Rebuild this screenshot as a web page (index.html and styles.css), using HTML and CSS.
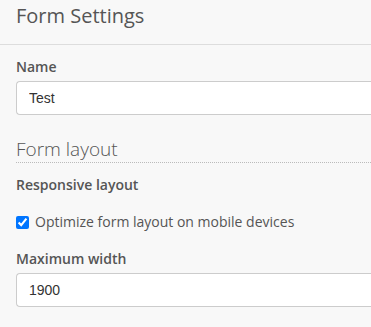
FILE: index.html
```html
<!doctype html>
<html lang="en">
	<head>
		<meta charset="UTF-8" />
		<title>Form Settings</title>
		<link rel="stylesheet" href="styles.css">
	</head>
	<body>
		<header class="panel-header">
			<h1>Form Settings</h1>
		</header>

		<main class="panel-body">
			<div class="field">
				<label for="name" class="label">Name</label>
				<input id="name" type="text" class="input" value="Test" />
			</div>

			<h2 class="section-title">Form layout</h2>

			<div class="field">
				<div class="label">Responsive layout</div>
				<label class="check">
					<input type="checkbox" checked />
					<span>Optimize form layout on mobile devices</span>
				</label>
			</div>

			<div class="field">
				<label for="max-width" class="label">Maximum width</label>
				<input id="max-width" type="text" class="input" value="1900" />
			</div>
		</main>
	</body>
</html>
```

FILE: styles.css
```css
:root {
	--color-bg: #f8f8f8;
	--color-text: #555555;
	--color-input-text: #333333;
	--color-border: #cccccc;
	--color-line: #dddddd;
	--color-blue: #0075ff;
}

body {
	margin: 0;
	background-color: var(--color-bg);
	color: var(--color-text);

	font-family: 'Open Sans', sans-serif;
	font-size: 14px;
	line-height: 20px;
	overflow: hidden;
}

h1,
h2 {
	margin: 0;
	font-weight: 400;
}

.panel-header {
	height: 44px;
	padding: 0 16px;
	border-bottom: 1px solid var(--color-line);
}

.panel-header h1 {
	font-size: 20px;
	line-height: 32px;
}

.panel-body {
	padding: 12px 0 0 16px;
}

.field {
	margin-bottom: 17px;
}

.label {
	display: block;
	margin-bottom: 4px;
	font-weight: 600;
}

/* inputs run on past the right edge of the panel */
.input {
	box-sizing: border-box;
	width: 100%;
	height: 34px;
	padding: 0 12px;

	border: 1px solid var(--color-border);
	border-right: none;
	border-radius: 4px 0 0 4px;
	background-color: #ffffff;
	color: var(--color-input-text);

	font-family: 'Liberation Sans', Arial, sans-serif;
	font-size: 14px;
}

.section-title {
	margin: 21px 0 12px;
	font-size: 19px;
	font-weight: 300;
	line-height: 26px;
	border-bottom: 1px dotted #bbbbbb;
}

.check {
	display: flex;
	align-items: center;
	gap: 6px;
	margin-top: 17px;
}

.check input {
	margin: 0;
	width: 13px;
	height: 13px;
	accent-color: var(--color-blue);
}
```
